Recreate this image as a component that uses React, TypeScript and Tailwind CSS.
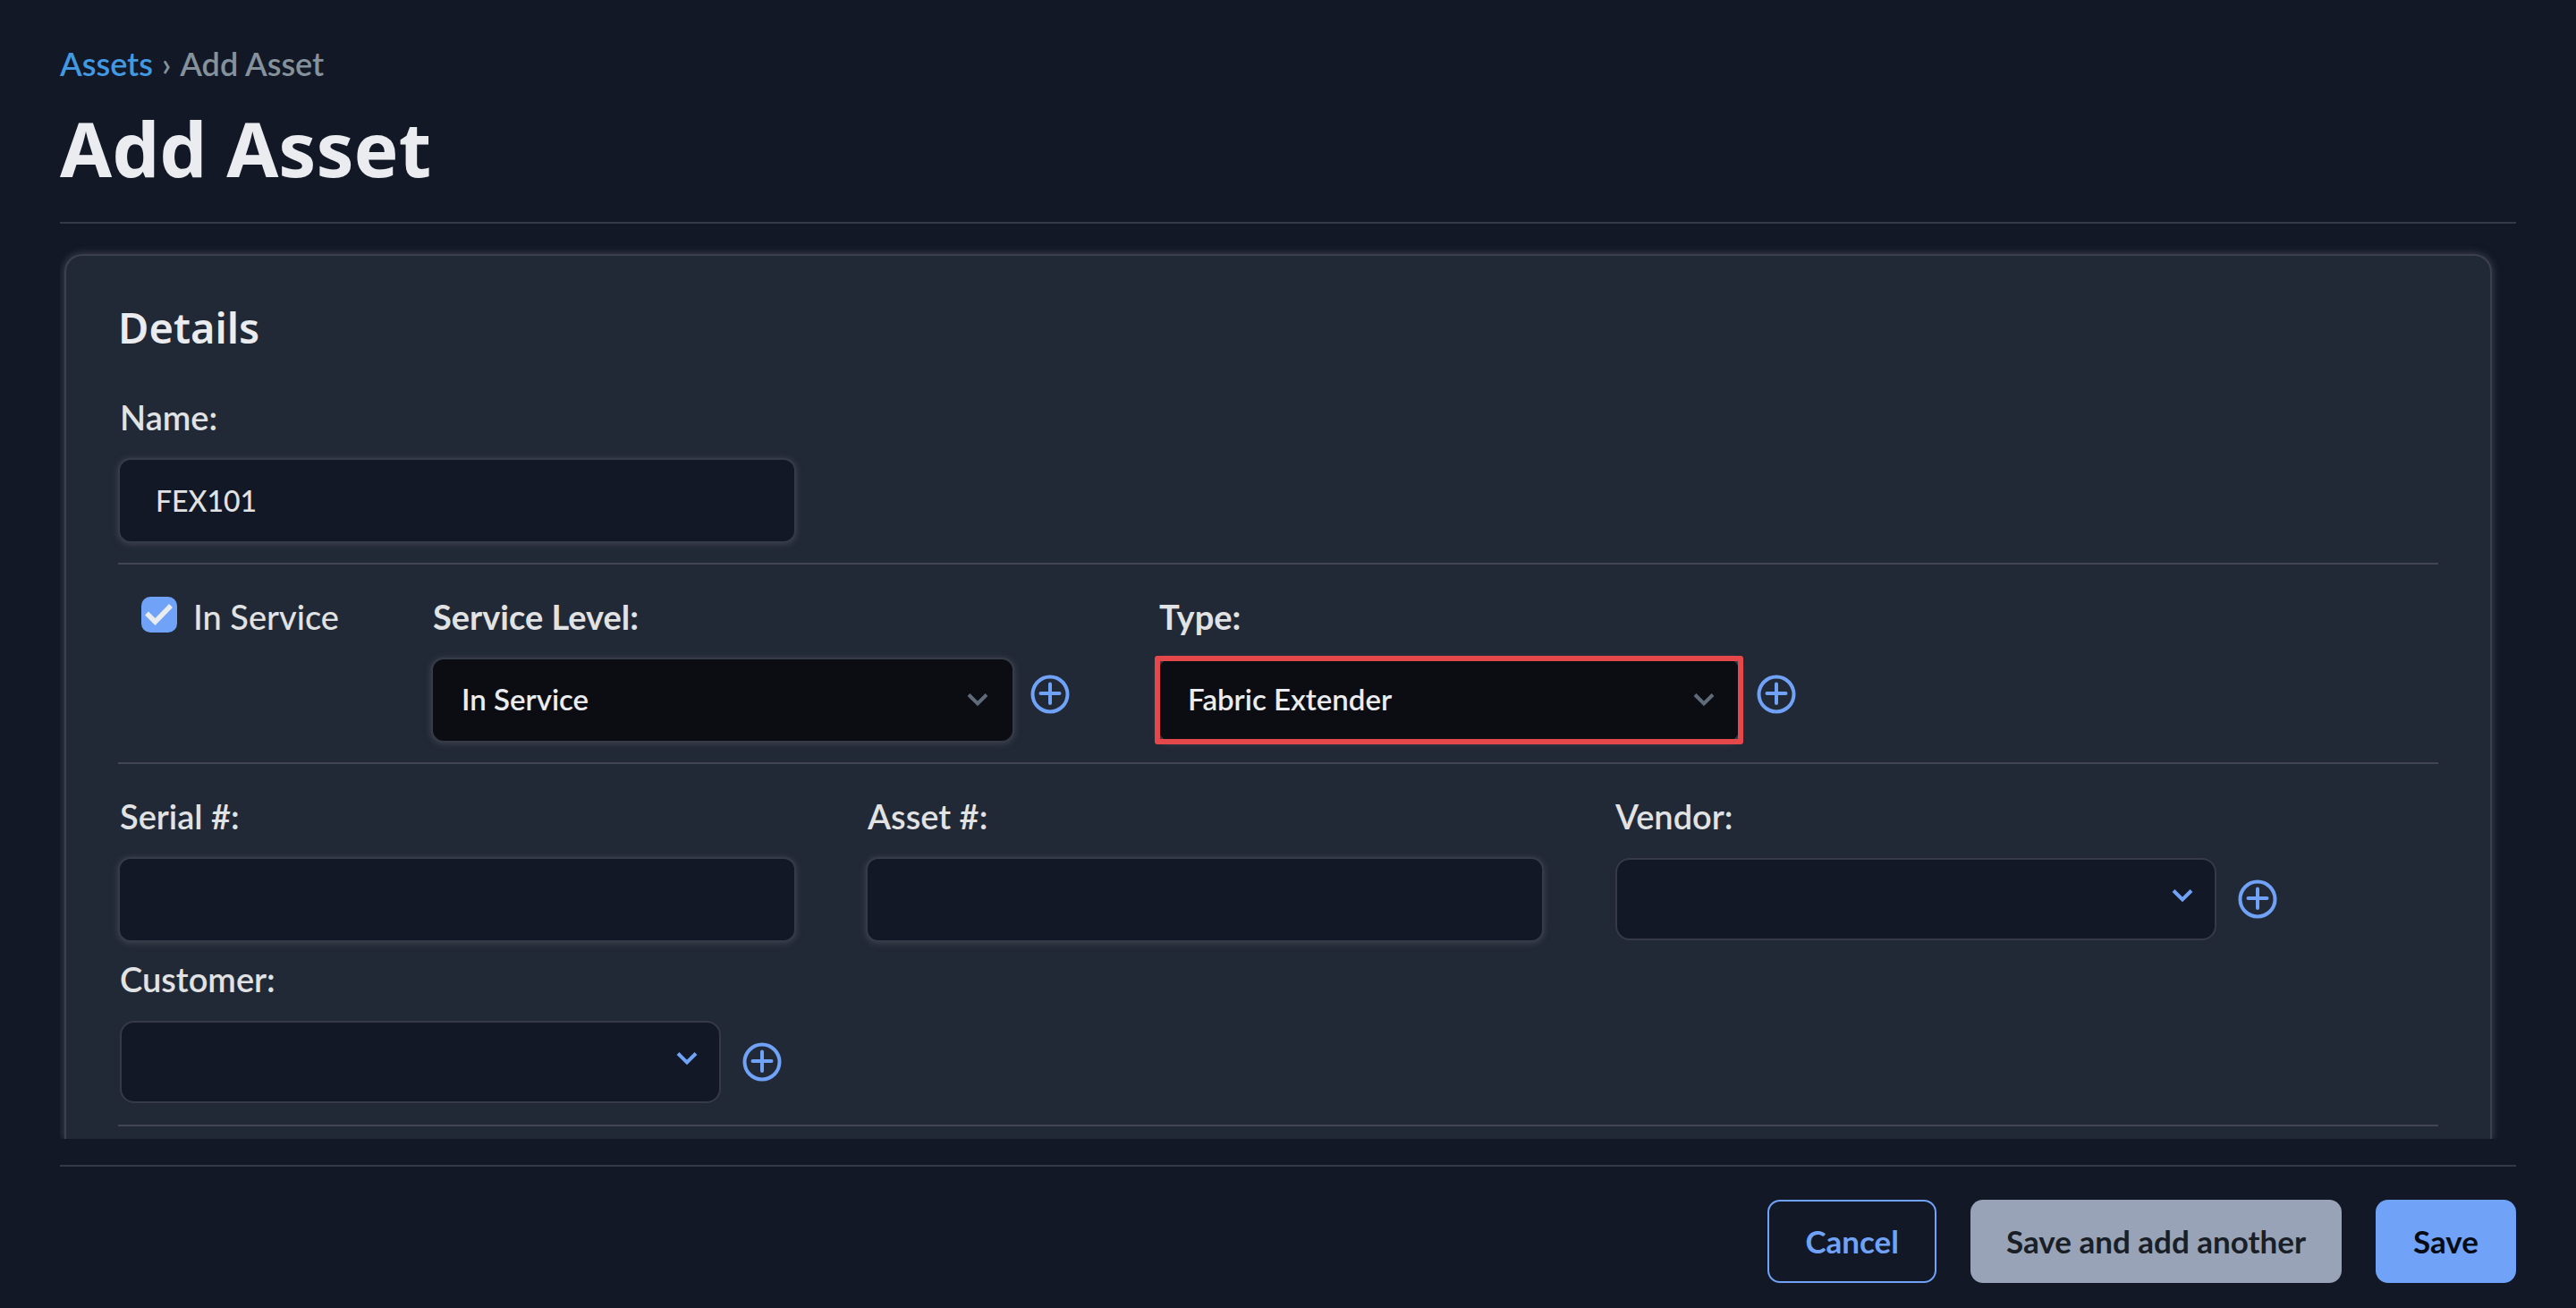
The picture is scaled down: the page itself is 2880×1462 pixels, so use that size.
import React from "react";

const labelClass = "block pl-[2px] text-[38px] leading-[46px] text-[#e1e2e3]";
const glow = "shadow-[0_1px_6px_1px_rgba(74,78,90,0.6)]";

function Chevron({ className }: { className: string }) {
  return (
    <svg viewBox="0 0 24 16" className={className} fill="none" stroke="currentColor" strokeWidth="4" aria-hidden="true">
      <path d="M2 2.5 12 12.5 22 2.5" />
    </svg>
  );
}

function AddButton({ label }: { label: string }) {
  return (
    <button type="button" aria-label={label} className="shrink-0 text-[#70a3f7]">
      <svg viewBox="0 0 44 44" className="size-11" fill="none" stroke="currentColor" strokeWidth="4" aria-hidden="true">
        <circle cx="22" cy="22" r="19.5" />
        <path d="M22 10.5V32M11.5 21H32.5" strokeLinecap="round" />
      </svg>
    </button>
  );
}

function TextField({ id, label, value }: { id: string; label: string; value?: string }) {
  return (
    <div className="w-[758px]">
      <label htmlFor={id} className={labelClass + " font-semibold"}>
        {label}
      </label>
      <input
        id={id}
        type="text"
        defaultValue={value}
        className={
          "mt-[23px] block h-[95px] w-full rounded-[14px] border-2 border-[#363b48] bg-[#121826] px-10 text-[32px] font-medium text-[#e1e2e3] outline-none " +
          glow
        }
      />
    </div>
  );
}

function DarkSelect({ id, label, value, highlighted }: { id: string; label: string; value: string; highlighted?: boolean }) {
  return (
    <div>
      <label htmlFor={id} className={labelClass + " font-bold"}>
        {label}
      </label>
      <div className="mt-[23px] flex h-[95px] items-center gap-[18px]">
        <div className="relative h-full w-[652px]">
          <select
            id={id}
            className={
              "size-full appearance-none rounded-[14px] border-2 border-[#363b48] bg-[#0c0d12] pr-20 pb-[2px] pl-8 text-[33px] font-semibold text-[#eaecef] outline-none " +
              glow
            }
          >
            <option>{value}</option>
          </select>
          <Chevron className="pointer-events-none absolute top-[39px] right-[29px] h-4 w-6 text-[#5f6b79]" />
          {highlighted && (
            <div className="pointer-events-none absolute -inset-x-[3px] -inset-y-[2px] rounded-[3px] border-[6px] border-[#e5484a]" />
          )}
        </div>
        <div className="pb-2">
          <AddButton label={"Add " + label.replace(":", "")} />
        </div>
      </div>
    </div>
  );
}

function LookupSelect({ id, label }: { id: string; label: string }) {
  return (
    <div>
      <label htmlFor={id} className={labelClass + " font-semibold"}>
        {label}
      </label>
      <div className="mt-[22px] flex h-24 items-center gap-6 pl-[2px]">
        <div className="relative h-[92px] w-[672px]">
          <select
            id={id}
            className="size-full appearance-none rounded-[16px] border-2 border-[#363a48] bg-[#121826] pr-20 pl-8 text-[33px] text-[#e1e2e3] outline-none"
          >
            <option></option>
          </select>
          <Chevron className="pointer-events-none absolute top-[34px] right-[26px] h-4 w-6 text-[#70a3f7]" />
        </div>
        <AddButton label={"Add " + label.replace(":", "")} />
      </div>
    </div>
  );
}

function Divider() {
  return <hr className="mt-[22px] border-t-2 border-[#414652]" />;
}

export default function App() {
  return (
    <div className="min-h-screen bg-[#121826] px-[67px] pt-[50px] pb-7 font-['Lato','Noto_Sans',sans-serif]">
      <header className="border-b-2 border-[#363a48] pb-8">
        <nav aria-label="Breadcrumb" className="flex gap-[10px] text-[36px] leading-[42px] font-semibold text-[#85929c]">
          <a href="#assets" className="text-[#4299e1]">
            Assets
          </a>
          <span>›</span>
          <span>Add Asset</span>
        </nav>
        <h1 className="mt-6 font-['Noto_Sans',sans-serif] text-[84px] leading-[100px] font-bold text-[#eaecf0]">Add Asset</h1>
      </header>

      <main className="overflow-hidden pt-[34px] pr-[27px] pl-[5px]">
        <form
          id="asset-form"
          className="rounded-t-[20px] border-2 border-b-0 border-[#3c404c] bg-[#222936] pt-12 pr-[58px] pb-[14px] pl-[58px] shadow-[0_0_8px_1px_rgba(90,90,104,0.6)]"
        >
          <h2 className="font-['Noto_Sans',sans-serif] text-[47px] leading-[64px] font-semibold text-[#eaecf0]">Details</h2>

          <div className="mt-[45px]">
            <TextField id="name" label="Name:" value="FEX101" />
          </div>
          <Divider />

          <div className="mt-[35px] flex">
            <label className="flex h-[46px] w-[350px] gap-[18px] pl-[26px] text-[38px] leading-[46px] font-medium text-[#e1e2e3]">
              <span className="relative mt-px size-10">
                <input type="checkbox" defaultChecked className="block size-full appearance-none rounded-[10px] bg-[#70a3f7]" />
                <svg viewBox="0 0 40 40" className="pointer-events-none absolute inset-0" fill="none" stroke="#eaecf0" strokeWidth="5.5" aria-hidden="true">
                  <path d="M6 18.5 15.5 28 33 10" />
                </svg>
              </span>
              In Service
            </label>
            <div className="flex gap-[98px]">
              <DarkSelect id="service-level" label="Service Level:" value="In Service" />
              <DarkSelect id="type" label="Type:" value="Fabric Extender" highlighted />
            </div>
          </div>
          <Divider />

          <div className="mt-[35px] flex flex-wrap gap-x-[78px] gap-y-[18px]">
            <TextField id="serial" label="Serial #:" />
            <TextField id="asset-number" label="Asset #:" />
            <LookupSelect id="vendor" label="Vendor:" />
            <LookupSelect id="customer" label="Customer:" />
          </div>
          <Divider />
        </form>
      </main>

      <footer className="mt-[29px] flex justify-end gap-[38px] border-t-2 border-[#363a48] pt-[37px] text-[35px] font-bold">
        <button type="button" className="h-[93px] rounded-[14px] border-2 border-[#70a3f7] px-10 text-[#70a3f7]">
          Cancel
        </button>
        <button type="submit" form="asset-form" className="h-[93px] rounded-[14px] bg-[#98a3b7] px-10 text-[#1a1e26]">
          Save and add another
        </button>
        <button type="submit" form="asset-form" className="h-[93px] rounded-[14px] bg-[#70a3f7] px-[42px] text-[#080b14]">
          Save
        </button>
      </footer>
    </div>
  );
}
